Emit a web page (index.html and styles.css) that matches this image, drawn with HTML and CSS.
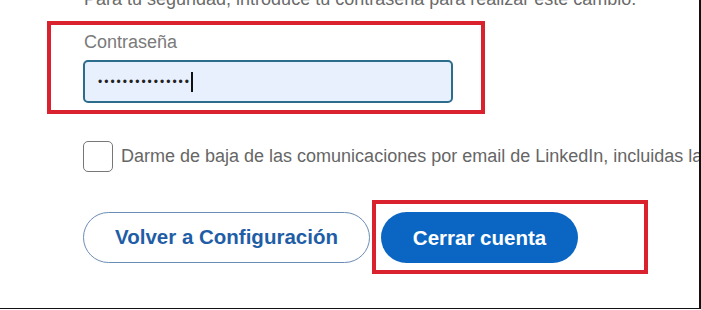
FILE: index.html
```html
<!DOCTYPE html>
<html lang="es">
<head>
<meta charset="utf-8">
<link rel="stylesheet" href="styles.css">
</head>
<body>
<div class="frame">
  <p class="intro">Para tu seguridad, introduce tu contraseña para realizar este cambio.</p>
  <div class="mark field-mark">
    <div class="label">Contraseña</div>
    <div class="input"><span class="dots">•••••••••••••••</span><span class="caret"></span></div>
  </div>
  <div class="check-row">
    <span class="checkbox"></span>
    <span class="check-text">Darme de baja de las comunicaciones por email de LinkedIn, incluidas las</span>
  </div>
  <div class="actions">
    <button class="btn btn-outline">Volver a Configuración</button>
    <div class="mark btn-mark">
      <button class="btn btn-primary">Cerrar cuenta</button>
    </div>
  </div>
</div>
</body>
</html>
```

FILE: styles.css
```css
* { box-sizing: border-box; }
html, body { margin: 0; padding: 0; background: #fff; }
body { width: 701px; height: 310px; overflow: hidden; font-family: "Liberation Sans", Arial, sans-serif; }

.frame {
  width: 701px;
  height: 309px;
  border-right: 2px solid #111;
  border-bottom: 1px solid #111;
  overflow: hidden;
  padding-left: 83px;
}

.intro {
  margin: -13px 0 0 1px;
  font-size: 18px;
  line-height: 24px;
  color: #6a6a6a;
  white-space: nowrap;
}

.mark { border: 4px solid #d9222e; }

.field-mark {
  margin: 10px 0 0 -36px;
  width: 438px;
  height: 93px;
  padding: 7px 0 0 32px;
}

.label {
  font-size: 18px;
  line-height: 21px;
  color: #7a7a7a;
  margin-left: 1px;
}

.input {
  margin-top: 7px;
  width: 370px;
  height: 43px;
  border: 2px solid #2d6d8c;
  border-radius: 5px;
  background: #e8f0fd;
  display: flex;
  align-items: center;
  padding-left: 13px;
}

.dots {
  font-size: 12px;
  letter-spacing: 2px;
  color: #222;
  line-height: 1;
}

.caret {
  width: 2px;
  height: 20px;
  background: #111;
  margin-left: 0;
}

.check-row {
  margin-top: 27px;
  display: flex;
  align-items: center;
  gap: 8px;
  white-space: nowrap;
}

.checkbox {
  flex: none;
  width: 30px;
  height: 31px;
  border: 1.5px solid #777;
  border-radius: 5px;
}

.check-text {
  font-size: 18px;
  color: #666;
}

.actions {
  margin-top: 28px;
  display: flex;
  align-items: center;
  gap: 2px;
}

.btn {
  font-family: "Liberation Sans", Arial, sans-serif;
  font-weight: bold;
  font-size: 20.5px;
  height: 51px;
  border-radius: 26px;
  cursor: pointer;
}

.btn-outline {
  width: 287px;
  background: #fff;
  border: 1px solid #6b8db5;
  color: #1f5ea6;
  padding: 0;
}

.btn-mark {
  width: 276px;
  height: 74px;
  padding: 5px 0 0 5px;
}

.btn-primary {
  width: 197px;
  background: #0a66c2;
  border: none;
  color: #fff;
  padding: 0;
  margin-top: 3px;
}
```
